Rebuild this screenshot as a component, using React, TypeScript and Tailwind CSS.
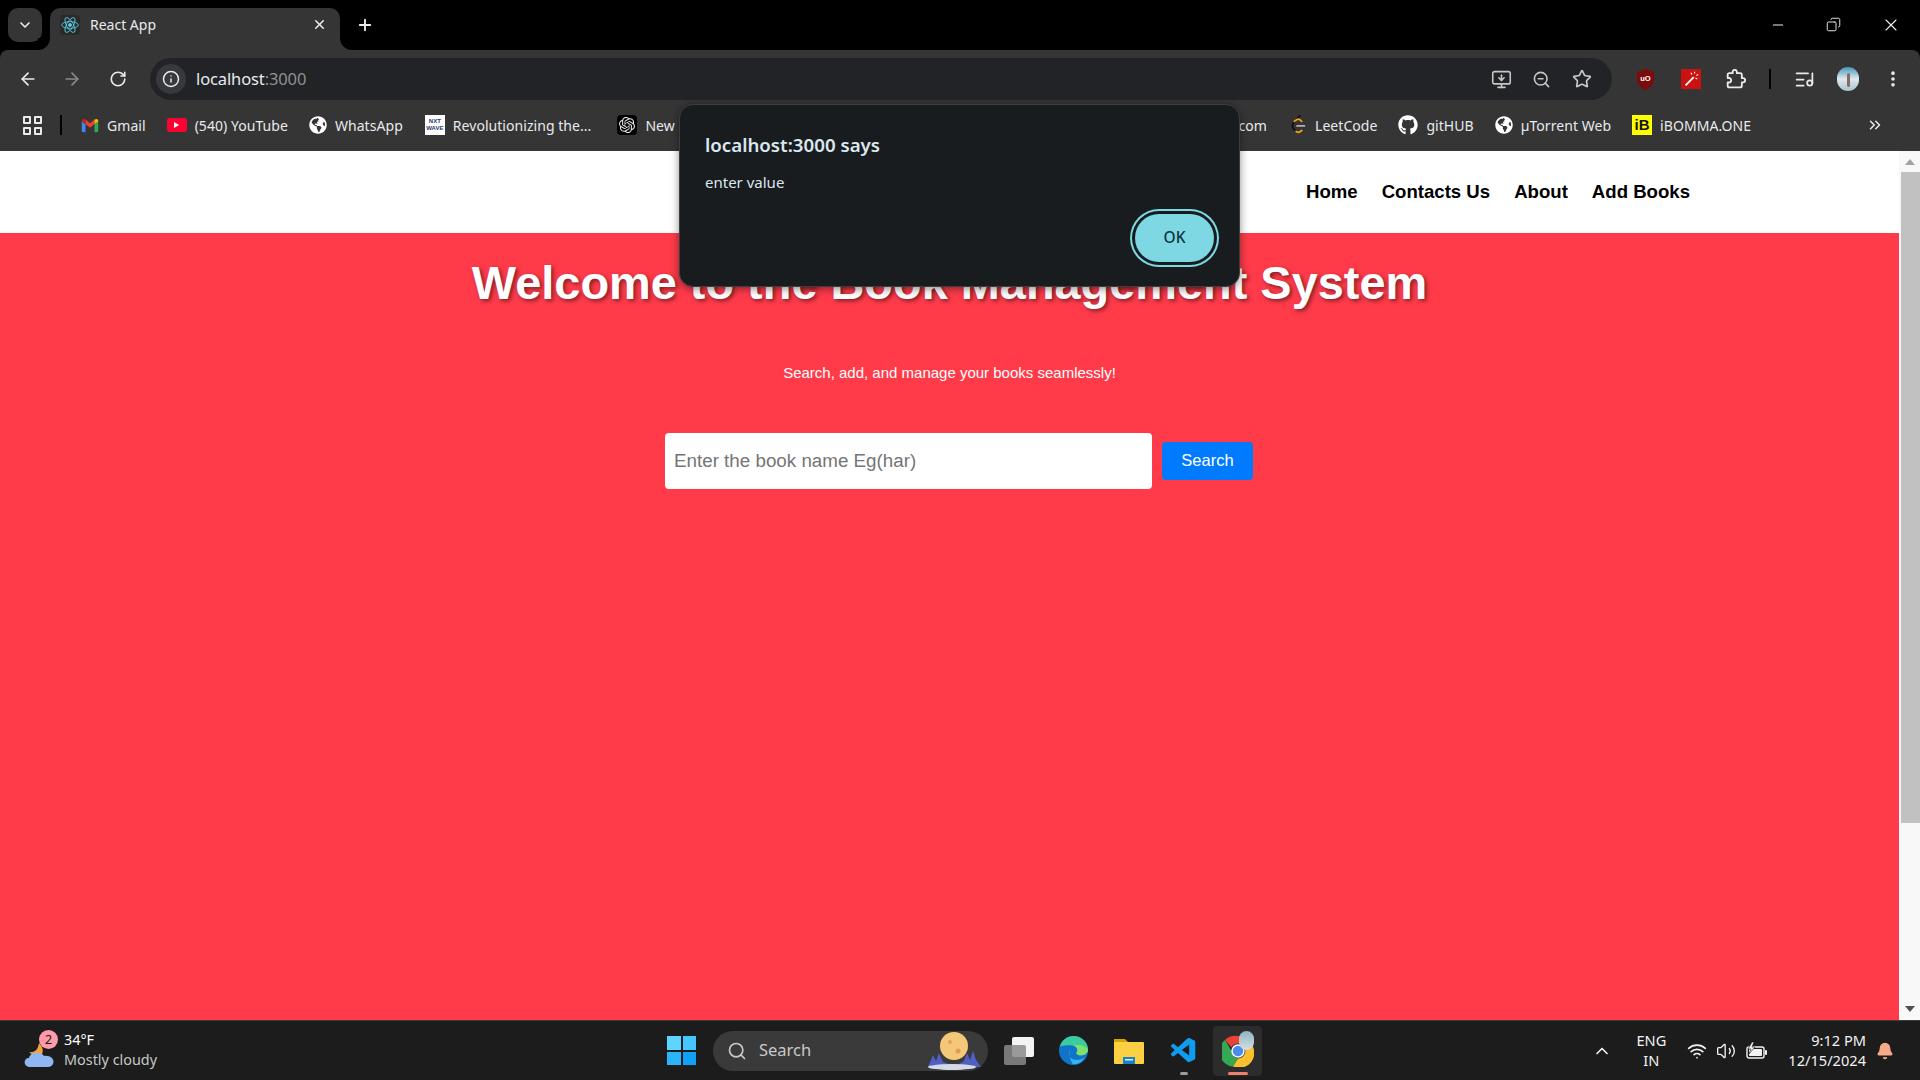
import React from 'react';
import {
  ArrowLeft, ArrowRight, RotateCw, Info, MonitorDown, ZoomOut, Star, ListMusic, MoreVertical,
  X, Plus, Minus, Copy, ChevronDown, ChevronUp, ChevronsRight, Wifi, Volume2, Bell, Search,
} from 'lucide-react';
import { FaGithub, FaGlobeAmericas } from 'react-icons/fa';
import { SiOpenai } from 'react-icons/si';
import { VscVscode } from 'react-icons/vsc';

const ui = { fontFamily: '"Noto Sans", sans-serif' };

const ReactLogo = () => (
  <svg viewBox="0 0 24 24" className="w-[20px] h-[20px] bg-[#2a2a2a] rounded-sm" fill="none" stroke="#5ccfe6" strokeWidth="1">
    <circle cx="12" cy="12" r="1.8" fill="#5ccfe6" />
    <ellipse cx="12" cy="12" rx="10" ry="4" />
    <ellipse cx="12" cy="12" rx="10" ry="4" transform="rotate(60 12 12)" />
    <ellipse cx="12" cy="12" rx="10" ry="4" transform="rotate(120 12 12)" />
  </svg>
);

const Gmail = () => (
  <svg viewBox="0 0 24 18" className="w-[18px] h-[15px]">
    <path d="M1 4v12c0 1 .7 2 2 2h3V7z" fill="#4285f4" />
    <path d="M18 7v11h3c1.300 0 2-1 2-2V4z" fill="#34a853" />
    <path d="M6 7l6 5 6-5V1l-6 5-6-5z" fill="#ea4335" />
    <path d="M1 4l5 3V1L4 .5C2.500 0 1 1.500 1 3z" fill="#c5221f" />
    <path d="M23 4l-5 3V1l2-.5C21.500 0 23 1.500 23 3z" fill="#fbbc04" />
  </svg>
);

const YouTube = () => (
  <div className="w-[20px] h-[14px] rounded-[3px] bg-[#ff0033] flex items-center justify-center">
    <div className="w-0 h-0 border-y-[3px] border-y-transparent border-l-[5px] border-l-white" />
  </div>
);

const NxtWave = () => (
  <div className="w-[20px] h-[20px] bg-white flex flex-col items-center justify-center text-[6px] leading-[7px] font-bold text-[#1c3a70]" style={{ fontFamily: '"Liberation Sans", sans-serif' }}>
    <span>NXT</span>
    <span>WAVE</span>
  </div>
);

const Gpt = () => (
  <div className="w-[20px] h-[20px] rounded bg-black flex items-center justify-center">
    <SiOpenai className="w-[16px] h-[16px] text-[#e8e8e8]" />
  </div>
);

const LeetCode = () => (
  <svg viewBox="0 0 18 24" className="w-[18px] h-[22px]" fill="none" strokeWidth="2" strokeLinecap="round">
    <path d="M11 2L4 10c-1.500 2-1.500 4 0 6l3 3" stroke="#111" />
    <path d="M5 8l3-2c1-.6 2-.6 3 .2L13 8" stroke="#f89f1b" />
    <path d="M7 19c1.500 1.300 3 1.300 4.500.2L13 18" stroke="#f89f1b" />
    <path d="M8 13h8" stroke="#b3b3b3" />
  </svg>
);

const IBomma = () => (
  <div className="w-[20px] h-[20px] bg-[#ffff00] flex items-center justify-center text-[15px] font-bold text-[#111]" style={{ fontFamily: '"Liberation Sans", sans-serif' }}>
    iB
  </div>
);

const Bookmark = ({ icon, label, className }: { icon: React.ReactNode; label: string; className?: string }) => (
  <div className={`flex items-center gap-[8px] shrink-0 ${className ?? ''}`}>
    {icon}
    <span className="text-[14px] tracking-[0.05px] text-[#e8eaed] whitespace-nowrap">{label}</span>
  </div>
);

const Globe = () => <FaGlobeAmericas className="w-[18px] h-[18px] text-white" />;

const Flare = ({ side }: { side: 'left' | 'right' }) => (
  <div className={`absolute bottom-0 w-[12px] h-[12px] bg-[#353535] ${side === 'left' ? '-left-[12px]' : '-right-[12px]'}`}>
    <div className={`w-full h-full bg-black ${side === 'left' ? 'rounded-br-[12px]' : 'rounded-bl-[12px]'}`} />
  </div>
);

const TabStrip = () => (
  <div className="h-[50px] bg-black flex shrink-0 text-[#e8eaed]" style={ui}>
    <div className="mt-[8px] ml-[8px] w-[34px] h-[34px] rounded-[10px] bg-[#353535] flex items-center justify-center">
      <ChevronDown className="w-[16px] h-[16px]" strokeWidth={2.5} />
    </div>
    <div className="relative mt-[8px] ml-[8px] w-[290px] h-[42px] pb-[9px] bg-[#353535] rounded-t-[10px] flex items-center pl-[10px] pr-[13px]">
      <Flare side="left" />
      <Flare side="right" />
      <ReactLogo />
      <span className="ml-[10px] text-[14px]">React App</span>
      <X className="ml-auto w-[15px] h-[15px]" strokeWidth={2.5} />
    </div>
    <Plus className="ml-[16px] mt-[16px] w-[18px] h-[18px]" strokeWidth={2.5} />
    <div className="ml-auto flex items-start text-[#f0f0f0]">
      <Minus className="mt-[17px] w-[16px] h-[16px]" strokeWidth={1.5} />
      <Copy className="ml-[40px] mt-[17px] w-[15px] h-[15px] -scale-x-100" strokeWidth={1.5} />
      <X className="ml-[40px] mr-[19px] mt-[15px] w-[20px] h-[20px]" strokeWidth={1.3} />
    </div>
  </div>
);

const Toolbar = () => (
  <div className="h-[50px] pt-[8px] bg-[#353535] flex items-center shrink-0 text-[#e8eaed] rounded-t-[8px]" style={ui}>
    <ArrowLeft className="ml-[18px] w-[20px] h-[20px]" strokeWidth={2} />
    <ArrowRight className="ml-[24px] w-[20px] h-[20px] text-[#8a8a8a]" strokeWidth={2} />
    <RotateCw className="ml-[27px] w-[18px] h-[18px]" strokeWidth={2.2} />
    <div className="ml-[23px] w-[1462px] h-[42px] rounded-full bg-[#222326] flex items-center pl-[6px]">
      <div className="w-[30px] h-[30px] rounded-full bg-[#37393c] flex items-center justify-center">
        <Info className="w-[18px] h-[18px]" strokeWidth={2} />
      </div>
      <span className="ml-[10px] text-[16.500px] tracking-[-0.12px]">
        localhost<span className="text-[#8f9092]">:3000</span>
      </span>
      <div className="ml-auto flex items-center text-[#c8c8c8]">
        <MonitorDown className="w-[21px] h-[21px]" strokeWidth={1.8} />
        <ZoomOut className="ml-[20px] w-[19px] h-[19px]" strokeWidth={2} />
        <Star className="ml-[21px] w-[20px] h-[20px]" strokeWidth={2} />
      </div>
      <div className="w-[20px]" />
    </div>
    <svg viewBox="0 0 20 22" className="ml-[24px] w-[19px] h-[21px]">
      <path d="M10 0l9 3v8c0 5-4 9-9 11-5-2-9-6-9-11V3z" fill="#7a0c0c" />
      <text x="10" y="13" fontSize="8" fontWeight="700" textAnchor="middle" fill="#fff" fontFamily="Liberation Sans">uO</text>
    </svg>
    <div className="ml-[26px] w-[20px] h-[20px] bg-[#cc1111] flex items-center justify-center">
      <svg viewBox="0 0 20 20" className="w-[18px] h-[18px]" stroke="#fff" fill="none" strokeWidth="2">
        <path d="M4 17L13 8" />
        <path d="M14 2v2M18 5l-2 1M10 3l1 2M17 10l-2-1" strokeWidth="1.200" />
      </svg>
    </div>
    <svg viewBox="0 0 24 24" className="ml-[25px] w-[20px] h-[20px]" fill="none" stroke="#e8eaed" strokeWidth="2.200" strokeLinejoin="round">
      <path d="M20.500 11H19V7c0-1.100-.9-2-2-2h-4V3.500C13 2.120 11.880 1 10.500 1S8 2.120 8 3.500V5H4c-1.100 0-1.990.9-1.990 2v3.800H3.500c1.490 0 2.700 1.210 2.700 2.700s-1.210 2.700-2.700 2.700H2V20c0 1.100.9 2 2 2h13c1.100 0 2-.9 2-2v-4h1.500c1.380 0 2.500-1.120 2.500-2.500S21.880 11 20.500 11z" />
    </svg>
    <div className="ml-[23px] w-[2px] h-[20px] bg-black" />
    <ListMusic className="ml-[23px] w-[21px] h-[21px]" strokeWidth={2} />
    <div className="ml-[22px] w-[22px] h-[24px] rounded-full bg-gradient-to-b from-[#3f97b8] via-[#dfe9ee] to-[#a9c3cf] flex justify-center">
      <div className="w-[3px] h-[14px] mt-[6px] bg-[#8a6a60] rounded-sm" />
    </div>
    <MoreVertical className="ml-[24px] w-[20px] h-[20px]" strokeWidth={2.4} />
  </div>
);

const BookmarksBar = () => (
  <div className="h-[51px] pb-[1px] bg-[#353535] flex items-center shrink-0" style={ui}>
    <div className="ml-[23px] w-[19px] h-[19px] grid grid-cols-2 gap-[3px]">
      {[0, 1, 2, 3].map((i) => (
        <div key={i} className="border-2 border-[#e8eaed] rounded-[1px]" />
      ))}
    </div>
    <div className="ml-[18px] w-[2px] h-[20px] bg-black" />
    <Bookmark icon={<Gmail />} label="Gmail" className="ml-[19px]" />
    <Bookmark icon={<YouTube />} label="(540) YouTube" className="ml-[21px]" />
    <Bookmark icon={<Globe />} label="WhatsApp" className="ml-[21px]" />
    <Bookmark icon={<NxtWave />} label="Revolutionizing the..." className="ml-[22px]" />
    <Bookmark icon={<Gpt />} label="New" className="ml-[26px]" />
    <span className="ml-auto text-[14px] tracking-[0.05px] text-[#e8eaed]">.com</span>
    <Bookmark icon={<LeetCode />} label="LeetCode" className="ml-[22px]" />
    <Bookmark icon={<FaGithub className="w-[20px] h-[20px] text-white" />} label="gitHUB" className="ml-[21px]" />
    <Bookmark icon={<Globe />} label="µTorrent Web" className="ml-[21px]" />
    <Bookmark icon={<IBomma />} label="iBOMMA.ONE" className="ml-[21px]" />
    <ChevronsRight className="ml-[115px] mr-[36px] w-[18px] h-[18px] text-[#e8eaed]" strokeWidth={2} />
  </div>
);

const Page = () => (
  <div className="flex-1 min-w-0 flex flex-col" style={{ fontFamily: '"Liberation Sans", Arial, sans-serif' }}>
    <nav className="h-[82px] bg-white flex items-center justify-end gap-6 pr-[209px] shrink-0">
      {['Home', 'Contacts Us', 'About', 'Add Books'].map((item) => (
        <a key={item} className="text-[18.600px] font-bold text-black">{item}</a>
      ))}
    </nav>
    <main className="flex-1 bg-[#ff3b4a] flex flex-col items-center text-white">
      <h1 className="mt-[23px] text-[46.900px] leading-[55px] font-bold [text-shadow:2px_2px_4px_rgba(0,0,0,0.5)]">
        Welcome to the Book Management System
      </h1>
      <p className="mt-[53px] text-[15px] leading-[18px]">Search, add, and manage your books seamlessly!</p>
      <div className="mt-[51px] pl-[19px] flex items-center gap-[10px]">
        <input
          placeholder="Enter the book name Eg(har)"
          className="w-[487px] h-[56px] pl-[9px] rounded-[4px] bg-white text-[18.800px] text-black placeholder:text-[#757575] outline-none"
        />
        <button className="w-[91px] h-[38px] pb-[1px] rounded-[4px] bg-[#007bff] text-[16.500px] text-white">Search</button>
      </div>
    </main>
  </div>
);

const Scrollbar = () => (
  <div className="w-[21px] bg-[#f8f8f8] flex flex-col items-center shrink-0">
    <div className="mt-[8px] w-0 h-0 border-x-[5px] border-x-transparent border-b-[6px] border-b-[#a3a3a3]" />
    <div className="mt-[7px] ml-[2px] w-[19px] h-[651px] bg-[#c1c1c1]" />
    <div className="mt-auto mb-[8px] w-0 h-0 border-x-[5px] border-x-transparent border-t-[6px] border-t-[#505050]" />
  </div>
);

const Dialog = () => (
  <div className="absolute left-[679px] top-[104px] w-[561px] h-[183px] rounded-[14px] bg-[#181c1f] border border-[#3b3f42] shadow-[0_2px_8px_rgba(0,0,0,0.45)] text-[#dbe7ee]" style={ui}>
    <div className="absolute left-[25px] top-[28px] text-[18.700px] leading-[24px] font-semibold">localhost:3000 says</div>
    <div className="absolute left-[25px] top-[67px] text-[15px] leading-[20px]">enter value</div>
    <button className="absolute left-[455px] top-[109px] w-[79px] h-[48px] rounded-full bg-[#7dd8e3] shadow-[0_0_0_3px_#181c1f,0_0_0_5px_#7dd8e3] text-[15.500px] font-medium text-[#0c3640]">
      OK
    </button>
  </div>
);

const WeatherIcon = () => (
  <div className="relative w-[34px] h-[36px] ml-[24px]">
    <svg viewBox="0 0 34 36" className="w-[34px] h-[36px]">
      <path d="M5 19c4 1 9-1 10-9 3 3 5 7 3 11-4 3-10 2-13-2z" fill="#f3a33b" />
      <path d="M6 34c-7 0-7-9-1-9 1-6 12-7 15-2 7-1 11 4 9 8-1 2-3 3-5 3z" fill="#8fb8f2" />
    </svg>
    <div className="absolute left-[15px] -top-[3px] w-[19px] h-[19px] rounded-full bg-[#ff9aa8] text-[#1a1a1a] text-[13px] leading-[19px] text-center">2</div>
  </div>
);

const MoonArt = () => (
  <svg viewBox="0 0 56 40" className="absolute right-[4px] top-0 w-[60px] h-[40px]">
    <circle cx="28" cy="15" r="14" fill="#f5c878" />
    <circle cx="24" cy="11" r="2" fill="#dfa25e" />
    <circle cx="32" cy="20" r="2.500" fill="#e29a5c" />
    <path d="M2 36l5-12 3 6 3-8 4 9 6 2h10l5-3 3-8 3 7 3-9 3 9 5 7z" fill="#4f5fc4" />
    <ellipse cx="26" cy="36" rx="24" ry="3" fill="#d5dbe6" />
  </svg>
);

const WinLogo = () => (
  <div className="w-[29px] h-[29px] grid grid-cols-2 gap-[2px] shrink-0">
    <div className="bg-[#5fd4ff]" />
    <div className="bg-[#45c6ff]" />
    <div className="bg-[#2cb4fb]" />
    <div className="bg-[#12a0f5]" />
  </div>
);

const EdgeLogo = () => (
  <svg viewBox="0 0 32 32" className="w-[31px] h-[31px]">
    <circle cx="16" cy="16" r="15" fill="#1172c9" />
    <path d="M2 12C4 4 11 1 16 1c8 0 15 6 15 14 0 4-3 6-7 6-3 0-5-1-5-3 2-2 1-6-3-7-6-1-11 0-14 1z" fill="#3ccb9e" />
    <path d="M31 15c0 3-3 6-7 6-3 0-5-1-5-3 2-2 1-6-3-7 6-2 13 0 15 4z" fill="#7fe06a" />
    <path d="M13 15c-3 3-2 8 2 10 4 1 9 1 13-2-3 5-8 8-13 7-2-5-5-10-2-15z" fill="#33b6f0" />
  </svg>
);

const FolderLogo = () => (
  <svg viewBox="0 0 30 30" className="w-[30px] h-[30px]">
    <path d="M0 3h11l4 4H0z" fill="#d9a306" />
    <rect x="0" y="6" width="30" height="22" rx="1" fill="#fbd043" />
    <rect x="9" y="21" width="12" height="7" fill="#1a81c9" />
    <rect x="11" y="23" width="8" height="1.500" fill="#d5ecf8" />
  </svg>
);

const ChromeLogo = () => (
  <svg viewBox="0 0 32 32" className="w-[32px] h-[32px]">
    <path d="M16 1a15 15 0 0 1 13 7.500H16a7.500 7.500 0 0 0-6.500 3.750L3 4.900A15 15 0 0 1 16 1z" fill="#ea4335" />
    <path d="M3 4.900l6.500 11.100a7.500 7.500 0 0 0 6.500 7.500l-5 8A15 15 0 0 1 3 4.900z" fill="#34a853" />
    <path d="M29 8.500a15 15 0 0 1-18 23l5-8a7.500 7.500 0 0 0 6.500-11 7.500 7.500 0 0 0-6.500-4z" fill="#fbc02d" />
    <circle cx="16" cy="16" r="6" fill="#4a8cf0" stroke="#fff" strokeWidth="1.500" />
  </svg>
);

const BatteryIcon = () => (
  <svg viewBox="0 0 22 18" className="ml-[10px] w-[22px] h-[18px]" fill="none">
    <rect x="1" y="5" width="17" height="11" rx="2" stroke="#f2f2f2" strokeWidth="1.400" />
    <rect x="3" y="7" width="13" height="7" rx="1" fill="#f2f2f2" />
    <rect x="19" y="8" width="2" height="5" rx="1" fill="#f2f2f2" />
    <path d="M6 0L2 7h3l-2 5 6-7H6l2-5z" fill="#f2f2f2" stroke="#1c1c1c" strokeWidth="0.600" />
  </svg>
);

const Taskbar = () => (
  <div className="h-[60px] bg-[#1c1c1c] border-t border-[#3a3a3a] flex items-center shrink-0 text-white" style={ui}>
    <div className="w-[667px] flex items-center shrink-0">
      <WeatherIcon />
      <div className="ml-[6px] -mt-[2px] text-[14.400px] leading-[20px]">
        <div>34°F</div>
        <div className="text-[#c8c8c8]">Mostly cloudy</div>
      </div>
    </div>
    <WinLogo />
    <div className="relative ml-[17px] w-[275px] h-[40px] rounded-full bg-[#3a3a3a] flex items-center pl-[14px] text-[#c9c9c9] shrink-0">
      <Search className="w-[20px] h-[20px]" strokeWidth={2} />
      <span className="ml-[12px] text-[16.500px]">Search</span>
      <MoonArt />
    </div>
    <div className="ml-[3px] w-[55px] flex justify-center">
      <div className="relative w-[30px] h-[28px]">
        <div className="absolute right-0 top-0 w-[22px] h-[20px] rounded-[2px] bg-[#f3f3f3]" />
        <div className="absolute left-0 bottom-0 w-[22px] h-[20px] rounded-[2px] bg-[#8a8a8a]/85" />
      </div>
    </div>
    <div className="w-[55px] flex justify-center"><EdgeLogo /></div>
    <div className="w-[55px] flex justify-center"><FolderLogo /></div>
    <div className="relative w-[55px] h-full flex items-center justify-center">
      <VscVscode className="w-[30px] h-[30px] text-[#0f9bf0]" />
      <div className="absolute bottom-[5px] left-[24px] w-[8px] h-[3px] rounded-full bg-[#9d9d9d]" />
    </div>
    <div className="relative ml-[2px] w-[49px] h-[50px] rounded-[4px] bg-[#2c2c2c] flex items-center justify-center">
      <ChromeLogo />
      <div className="absolute right-[8px] top-[5px] w-[15px] h-[19px] rounded-full bg-gradient-to-b from-[#8fb4c2] to-[#d6dfe3]" />
      <div className="absolute bottom-[1px] left-[15px] w-[20px] h-[3px] rounded-full bg-[#f0806c]" />
    </div>
    <div className="ml-auto flex items-center text-[#f2f2f2]">
      <ChevronUp className="w-[20px] h-[20px]" strokeWidth={2} />
      <div className="ml-[10px] -mt-[2px] w-[58px] text-center text-[14.600px] leading-[20px]">
        <div>ENG</div>
        <div>IN</div>
      </div>
      <Wifi className="ml-[7px] w-[20px] h-[20px]" strokeWidth={2} />
      <Volume2 className="ml-[9px] w-[20px] h-[20px]" strokeWidth={1.6} />
      <BatteryIcon />
      <div className="ml-[20px] -mt-[2px] text-right text-[14.600px] leading-[20px]">
        <div>9:12 PM</div>
        <div>12/15/2024</div>
      </div>
      <Bell className="ml-[10px] mr-[26px] w-[18px] h-[20px] text-[#f8a98a] fill-[#f8a98a]" />
    </div>
  </div>
);

export default function App() {
  return (
    <div className="relative w-full h-screen overflow-hidden flex flex-col bg-black">
      <TabStrip />
      <Toolbar />
      <BookmarksBar />
      <div className="flex-1 min-h-0 flex">
        <Page />
        <Scrollbar />
      </div>
      <Taskbar />
      <Dialog />
    </div>
  );
}
